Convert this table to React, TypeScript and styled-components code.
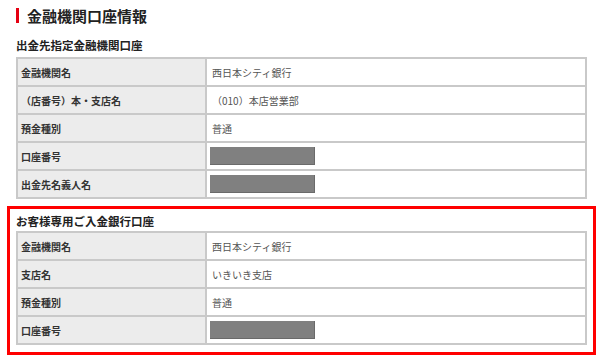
import React from "react";
import styled, { createGlobalStyle } from "styled-components";

const GlobalStyle = createGlobalStyle`
  html, body {
    margin: 0;
    padding: 0;
    background: #fff;
  }
  body {
    font-family: "Noto Sans CJK JP", "Noto Sans", sans-serif;
    color: #333;
  }
`;

const Page = styled.div`
  width: 589px;
  padding: 7px 0 0 7px;
`;

const Section = styled.div`
  padding: 0 9px;
`;

const Heading = styled.h2`
  display: flex;
  align-items: center;
  gap: 8px;
  height: 17px;
  margin: 0;
  font-size: 15px;
  font-weight: 700;
  color: #222;

  &::before {
    content: "";
    width: 3px;
    height: 15px;
    background: #e50012;
  }
`;

const SubHeading = styled.h3<{ $top?: number }>`
  margin: ${(p) => p.$top ?? 0}px 0 ${(p) => (p.$top ? 4 : 0)}px;
  font-size: 11.5px;
  line-height: ${(p) => (p.$top ? 16 : 20)}px;
  font-weight: 700;
  color: #222;
`;

const Highlight = styled.div`
  margin-top: 7px;
  border: 3px solid #f00;
  padding: 2px 6px 7px;
`;

const Table = styled.div`
  display: grid;
  grid-template-columns: 189px 1fr;
  border-top: 2px solid #c9c9c9;
  border-left: 2px solid #c9c9c9;
`;

const Cell = styled.div<{ $label?: boolean }>`
  display: flex;
  align-items: center;
  height: 26px;
  padding: 0 5px 0 ${(p) => (p.$label ? 3 : 5)}px;
  border-right: 2px solid #c9c9c9;
  border-bottom: 2px solid #c9c9c9;
  background: ${(p) => (p.$label ? "#ececec" : "#fff")};
  font-size: 10px;
  font-weight: ${(p) => (p.$label ? 700 : 400)};
  color: ${(p) => (p.$label ? "#333" : "#555")};
  white-space: nowrap;
`;

const Masked = styled.span`
  display: block;
  width: 104px;
  height: 17px;
  margin-left: -2px;
  background: #808080;
  border-right: 1px solid #6a6a6a;
  border-bottom: 1px solid #6a6a6a;
`;

type Row = { label: string; value?: string };

const payoutRows: Row[] = [
  { label: "金融機関名", value: "西日本シティ銀行" },
  { label: "（店番号）本・支店名", value: "（010）本店営業部" },
  { label: "預金種別", value: "普通" },
  { label: "口座番号" },
  { label: "出金先名義人名" },
];

const depositRows: Row[] = [
  { label: "金融機関名", value: "西日本シティ銀行" },
  { label: "支店名", value: "いきいき支店" },
  { label: "預金種別", value: "普通" },
  { label: "口座番号" },
];

const AccountTable = ({ rows }: { rows: Row[] }) => (
  <Table>
    {rows.map((r) => (
      <React.Fragment key={r.label}>
        <Cell $label>{r.label}</Cell>
        <Cell>{r.value ?? <Masked />}</Cell>
      </React.Fragment>
    ))}
  </Table>
);

export default function App() {
  return (
    <Page>
      <GlobalStyle />
      <Section>
        <Heading>金融機関口座情報</Heading>
        <SubHeading $top={13}>出金先指定金融機関口座</SubHeading>
        <AccountTable rows={payoutRows} />
      </Section>
      <Highlight>
        <SubHeading>お客様専用ご入金銀行口座</SubHeading>
        <AccountTable rows={depositRows} />
      </Highlight>
    </Page>
  );
}
